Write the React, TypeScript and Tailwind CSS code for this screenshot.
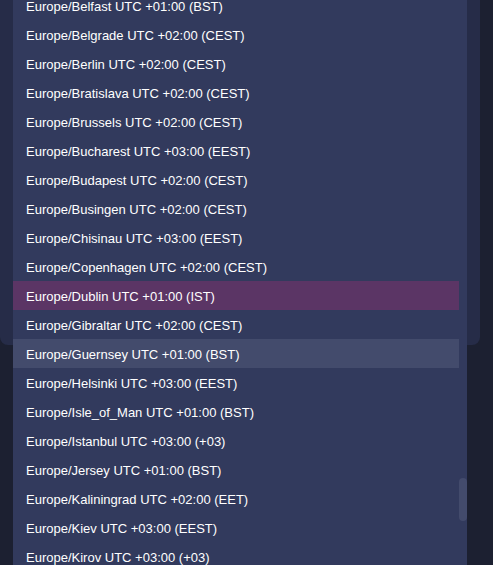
const zones = [
  'Europe/Belfast UTC +01:00 (BST)',
  'Europe/Belgrade UTC +02:00 (CEST)',
  'Europe/Berlin UTC +02:00 (CEST)',
  'Europe/Bratislava UTC +02:00 (CEST)',
  'Europe/Brussels UTC +02:00 (CEST)',
  'Europe/Bucharest UTC +03:00 (EEST)',
  'Europe/Budapest UTC +02:00 (CEST)',
  'Europe/Busingen UTC +02:00 (CEST)',
  'Europe/Chisinau UTC +03:00 (EEST)',
  'Europe/Copenhagen UTC +02:00 (CEST)',
  'Europe/Dublin UTC +01:00 (IST)',
  'Europe/Gibraltar UTC +02:00 (CEST)',
  'Europe/Guernsey UTC +01:00 (BST)',
  'Europe/Helsinki UTC +03:00 (EEST)',
  'Europe/Isle_of_Man UTC +01:00 (BST)',
  'Europe/Istanbul UTC +03:00 (+03)',
  'Europe/Jersey UTC +01:00 (BST)',
  'Europe/Kaliningrad UTC +02:00 (EET)',
  'Europe/Kiev UTC +03:00 (EEST)',
  'Europe/Kirov UTC +03:00 (+03)',
]

const selected = 'Europe/Dublin UTC +01:00 (IST)'
const hovered = 'Europe/Guernsey UTC +01:00 (BST)'

export default function App() {
  return (
    <div
      className="relative h-screen w-full overflow-hidden bg-[#1c2031]"
      style={{ fontFamily: '"Liberation Sans", Arial, sans-serif' }}
    >
      {/* panel behind the open select */}
      <div className="h-[345px] w-[480px] rounded-b-lg bg-[#262c48]" />

      {/* dropdown list */}
      <div className="absolute left-[13px] top-[-9px] flex w-[454px] bg-[#323a5d]">
        <ul className="flex-1">
          {zones.map((z) => (
            <li
              key={z}
              className={
                'flex h-[29px] items-center px-[13px] pt-[3px] text-[13px] text-white ' +
                (z === selected ? 'bg-[#5b3565]' : z === hovered ? 'bg-[#434b6c]' : '')
              }
            >
              {z}
            </li>
          ))}
        </ul>
        {/* scrollbar */}
        <div className="w-[8px] pt-[487px]">
          <div className="h-[43px] w-[8px] rounded-full bg-[#434b6c]" />
        </div>
      </div>
    </div>
  )
}
